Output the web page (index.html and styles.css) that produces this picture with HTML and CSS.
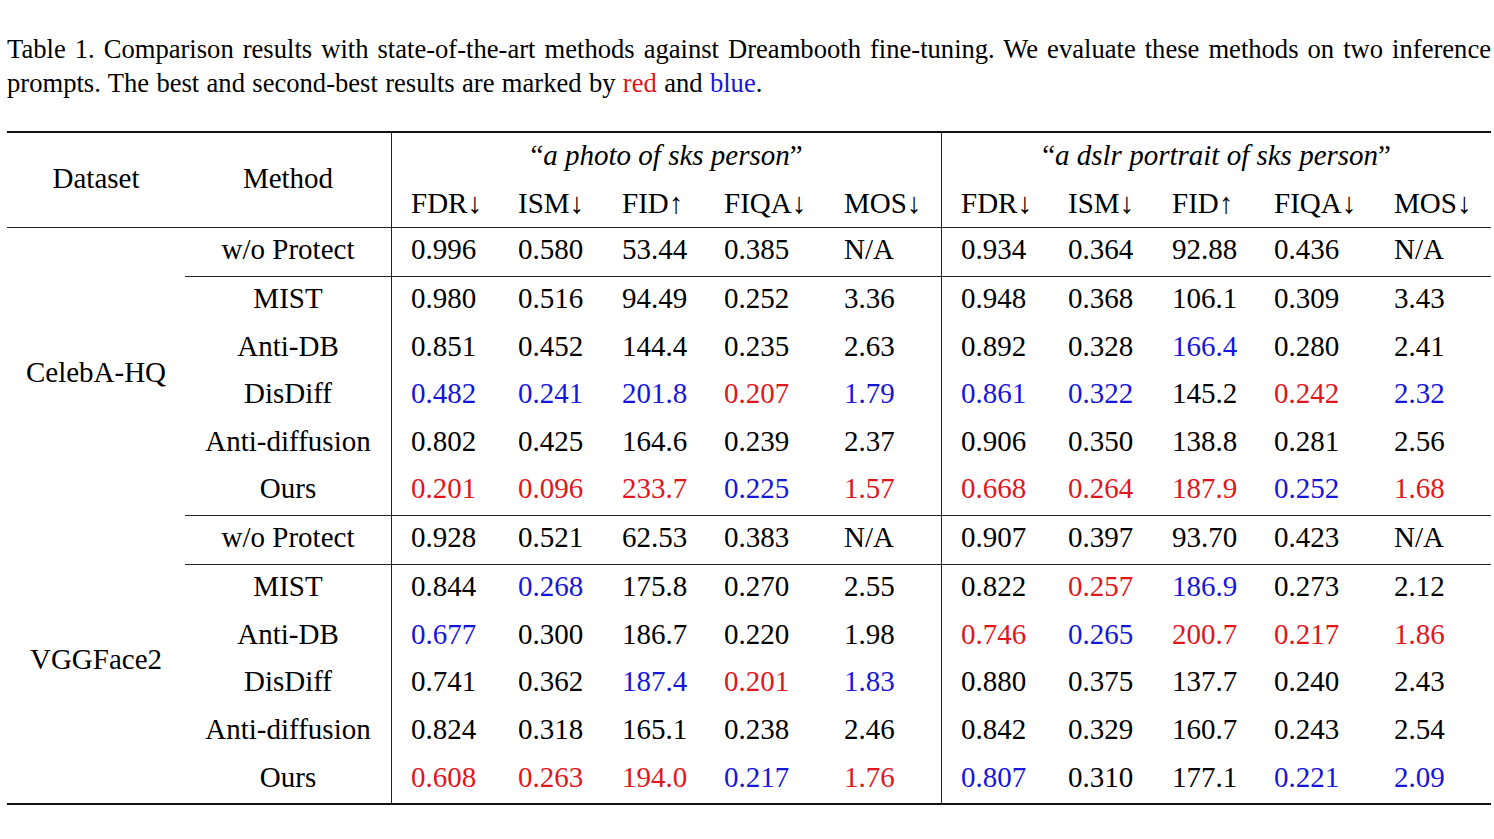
FILE: index.html
```html
<!DOCTYPE html>
<html>
<head>
<meta charset="utf-8">
<link rel="stylesheet" href="styles.css">
</head>
<body>
<div class="page">
  <div class="caption">
    <div class="cap-line first">Table 1. Comparison results with state-of-the-art methods against Dreambooth fine-tuning. We evaluate these methods on two inference</div>
    <div class="cap-line">prompts. The best and second-best results are marked by <span class="r">red</span> and <span class="b">blue</span>.</div>
  </div>
  <table class="results">
    <colgroup>
      <col class="c-ds"><col class="c-m">
      <col class="c1"><col class="c2"><col class="c3"><col class="c4"><col class="c5">
      <col class="c1"><col class="c2"><col class="c3"><col class="c4"><col class="c5">
    </colgroup>
    <thead>
      <tr class="h1">
        <th rowspan="2" class="ctr mid">Dataset</th>
        <th rowspan="2" class="ctr mid">Method</th>
        <th colspan="5" class="ctr vl">“<i>a photo of sks person</i>”</th>
        <th colspan="5" class="ctr vl">“<i>a dslr portrait of sks person</i>”</th>
      </tr>
      <tr class="h2">
        <th class="vl">FDR↓</th><th>ISM↓</th><th>FID↑</th><th>FIQA↓</th><th>MOS↓</th>
        <th class="vl">FDR↓</th><th>ISM↓</th><th>FID↑</th><th>FIQA↓</th><th>MOS↓</th>
      </tr>
    </thead>
    <tbody>
      <tr class="base">
        <td rowspan="6" class="ctr ds sep">CelebA-HQ</td>
        <td class="ctr">w/o Protect</td>
        <td class="vl">0.996</td><td>0.580</td><td>53.44</td><td>0.385</td><td>N/A</td>
        <td class="vl">0.934</td><td>0.364</td><td>92.88</td><td>0.436</td><td>N/A</td>
      </tr>
      <tr>
        <td class="ctr">MIST</td>
        <td class="vl">0.980</td><td>0.516</td><td>94.49</td><td>0.252</td><td>3.36</td>
        <td class="vl">0.948</td><td>0.368</td><td>106.1</td><td>0.309</td><td>3.43</td>
      </tr>
      <tr>
        <td class="ctr">Anti-DB</td>
        <td class="vl">0.851</td><td>0.452</td><td>144.4</td><td>0.235</td><td>2.63</td>
        <td class="vl">0.892</td><td>0.328</td><td class="b">166.4</td><td>0.280</td><td>2.41</td>
      </tr>
      <tr>
        <td class="ctr">DisDiff</td>
        <td class="vl b">0.482</td><td class="b">0.241</td><td class="b">201.8</td><td class="r">0.207</td><td class="b">1.79</td>
        <td class="vl b">0.861</td><td class="b">0.322</td><td>145.2</td><td class="r">0.242</td><td class="b">2.32</td>
      </tr>
      <tr>
        <td class="ctr">Anti-diffusion</td>
        <td class="vl">0.802</td><td>0.425</td><td>164.6</td><td>0.239</td><td>2.37</td>
        <td class="vl">0.906</td><td>0.350</td><td>138.8</td><td>0.281</td><td>2.56</td>
      </tr>
      <tr class="last">
        <td class="ctr">Ours</td>
        <td class="vl r">0.201</td><td class="r">0.096</td><td class="r">233.7</td><td class="b">0.225</td><td class="r">1.57</td>
        <td class="vl r">0.668</td><td class="r">0.264</td><td class="r">187.9</td><td class="b">0.252</td><td class="r">1.68</td>
      </tr>
      <tr class="base">
        <td rowspan="6" class="ctr ds">VGGFace2</td>
        <td class="ctr">w/o Protect</td>
        <td class="vl">0.928</td><td>0.521</td><td>62.53</td><td>0.383</td><td>N/A</td>
        <td class="vl">0.907</td><td>0.397</td><td>93.70</td><td>0.423</td><td>N/A</td>
      </tr>
      <tr>
        <td class="ctr">MIST</td>
        <td class="vl">0.844</td><td class="b">0.268</td><td>175.8</td><td>0.270</td><td>2.55</td>
        <td class="vl">0.822</td><td class="r">0.257</td><td class="b">186.9</td><td>0.273</td><td>2.12</td>
      </tr>
      <tr>
        <td class="ctr">Anti-DB</td>
        <td class="vl b">0.677</td><td>0.300</td><td>186.7</td><td>0.220</td><td>1.98</td>
        <td class="vl r">0.746</td><td class="b">0.265</td><td class="r">200.7</td><td class="r">0.217</td><td class="r">1.86</td>
      </tr>
      <tr>
        <td class="ctr">DisDiff</td>
        <td class="vl">0.741</td><td>0.362</td><td class="b">187.4</td><td class="r">0.201</td><td class="b">1.83</td>
        <td class="vl">0.880</td><td>0.375</td><td>137.7</td><td>0.240</td><td>2.43</td>
      </tr>
      <tr>
        <td class="ctr">Anti-diffusion</td>
        <td class="vl">0.824</td><td>0.318</td><td>165.1</td><td>0.238</td><td>2.46</td>
        <td class="vl">0.842</td><td>0.329</td><td>160.7</td><td>0.243</td><td>2.54</td>
      </tr>
      <tr>
        <td class="ctr">Ours</td>
        <td class="vl r">0.608</td><td class="r">0.263</td><td class="r">194.0</td><td class="b">0.217</td><td class="r">1.76</td>
        <td class="vl b">0.807</td><td>0.310</td><td>177.1</td><td class="b">0.221</td><td class="b">2.09</td>
      </tr>
    </tbody>
  </table>
</div>
</body>
</html>
```

FILE: styles.css
```css
html, body {
  margin: 0;
  padding: 0;
  background: #ffffff;
}

body {
  font-family: "Liberation Serif", "Times New Roman", serif;
  color: #000;
}

.page {
  padding: 32px 0 0 7px;
  width: 1484px;
}

.caption {
  font-size: 26.6px;
  line-height: 34px;
}

.cap-line {
  white-space: nowrap;
  word-spacing: 0.7px;
}

.cap-line.first {
  white-space: normal;
  word-spacing: 0;
  text-align: justify;
  text-align-last: justify;
}

.r { color: #e0161c; }
.b { color: #1616d8; }

.results {
  margin-top: 31px;
  width: 1484px;
  table-layout: fixed;
  border-collapse: separate;
  border-spacing: 0;
  border-top: 2px solid #111;
  border-bottom: 2px solid #111;
  font-size: 29px;
}

.c-ds { width: 178px; }
.c-m { width: 206px; }
.c1 { width: 108px; }
.c2 { width: 104px; }
.c3 { width: 102px; }
.c4 { width: 120px; }
.c5 { width: 116px; }

.results th,
.results td {
  box-sizing: border-box;
  font-weight: normal;
  text-align: left;
  vertical-align: middle;
  padding: 0 0 5px 19px;
  white-space: nowrap;
  line-height: 32px;
}

.results .ctr {
  text-align: center;
  padding-left: 0;
}

.results .vl {
  border-left: 1px solid #222;
}

.results tr.h1 th { height: 47px; padding-bottom: 3px; }
.results tr.h2 th { height: 48px; padding-bottom: 1px; border-bottom: 1px solid #222; }
.results thead th.mid { border-bottom: 1px solid #222; padding-bottom: 4px; }

.results tbody td { height: 47.6px; }

.results tr.base td { height: 49px; padding-bottom: 6px; border-bottom: 1px solid #222; }
.results tr.base td.ds { border-bottom: none; padding-bottom: 0; }
.results td.ds.sep { border-bottom: 1px solid #222; }
.results tr.last td { height: 48.6px; padding-bottom: 6px; border-bottom: 1px solid #222; }
```
